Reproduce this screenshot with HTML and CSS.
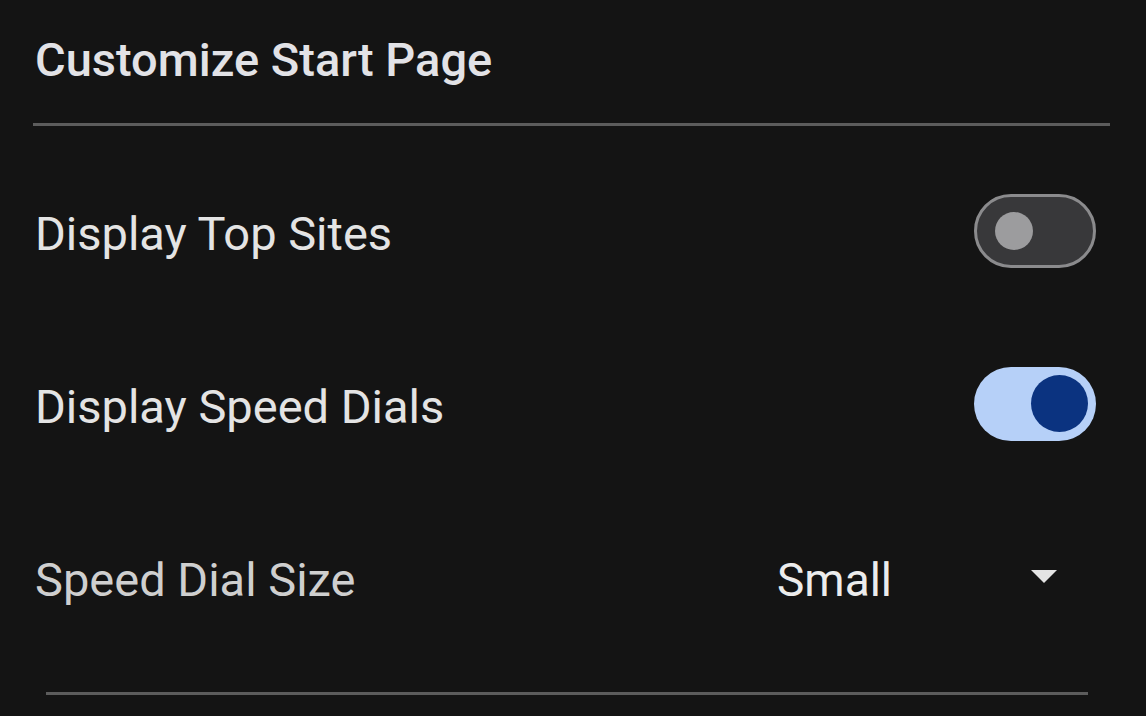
FILE: index.html
```html
<!DOCTYPE html>
<html lang="en">
<head>
<meta charset="utf-8">
<title>Customize Start Page</title>
<link rel="stylesheet" href="styles.css">
</head>
<body>
<main class="panel">
  <h1 class="title">Customize Start Page</h1>
  <hr class="divider">
  <div class="row">
    <span class="label">Display Top Sites</span>
    <span class="switch switch-off"><span class="knob"></span></span>
  </div>
  <div class="row">
    <span class="label">Display Speed Dials</span>
    <span class="switch switch-on"><span class="knob"></span></span>
  </div>
  <div class="row">
    <span class="label label-dim">Speed Dial Size</span>
    <span class="dropdown">
      <span class="dropdown-value">Small</span>
      <svg class="caret" width="26" height="13" viewBox="0 0 26 13"><path d="M0 0 H26 L13 13 Z" fill="#e4e4e4"/></svg>
    </span>
  </div>
  <hr class="divider divider-bottom">
</main>
</body>
</html>
```

FILE: styles.css
```css
html, body {
  margin: 0;
  padding: 0;
  background: #141414;
}
body {
  font-family: Roboto, "Noto Sans", sans-serif;
  color: #e3e3e3;
  width: 1146px;
  height: 716px;
  overflow: hidden;
}
.panel {
  padding: 31px 36px 0 33px;
  display: flex;
  flex-direction: column;
}
.title {
  margin: 0;
  font-size: 47px;
  font-weight: 500;
  line-height: 57px;
  color: #e2e2e6;
  padding-left: 2px;
}
.divider {
  margin: 35px 0 0 0;
  border: 0;
  height: 3px;
  background: #5c5c5c;
}
.row {
  height: 173px;
  display: flex;
  align-items: center;
  justify-content: space-between;
}
.divider + .row {
  margin-top: 18px;
}
.label {
  font-size: 47px;
  line-height: 56px;
  padding-top: 6px;
  padding-left: 2px;
  color: #e4e4e4;
}
.label-dim {
  color: #cfcfcf;
}
.switch {
  box-sizing: border-box;
  width: 122px;
  height: 74px;
  border-radius: 37px;
  margin-right: 14px;
  display: flex;
  align-items: center;
}
.switch-off {
  background: #38383a;
  border: 3px solid #8b8b8d;
  padding-left: 18px;
}
.switch-off .knob {
  width: 38px;
  height: 38px;
  border-radius: 50%;
  background: #9c9c9e;
}
.switch-on {
  background: #b6d0f8;
  justify-content: flex-end;
  padding-right: 8px;
}
.switch-on .knob {
  width: 57px;
  height: 57px;
  border-radius: 50%;
  background: #0b3380;
}
.dropdown {
  width: 280px;
  margin-right: 53px;
  display: flex;
  align-items: center;
  justify-content: space-between;
}
.dropdown-value {
  font-size: 46px;
  line-height: 56px;
  padding-top: 6px;
  color: #ececec;
}
.caret {
  display: block;
}
.divider-bottom {
  margin: 29px 22px 0 13px;
}
```
